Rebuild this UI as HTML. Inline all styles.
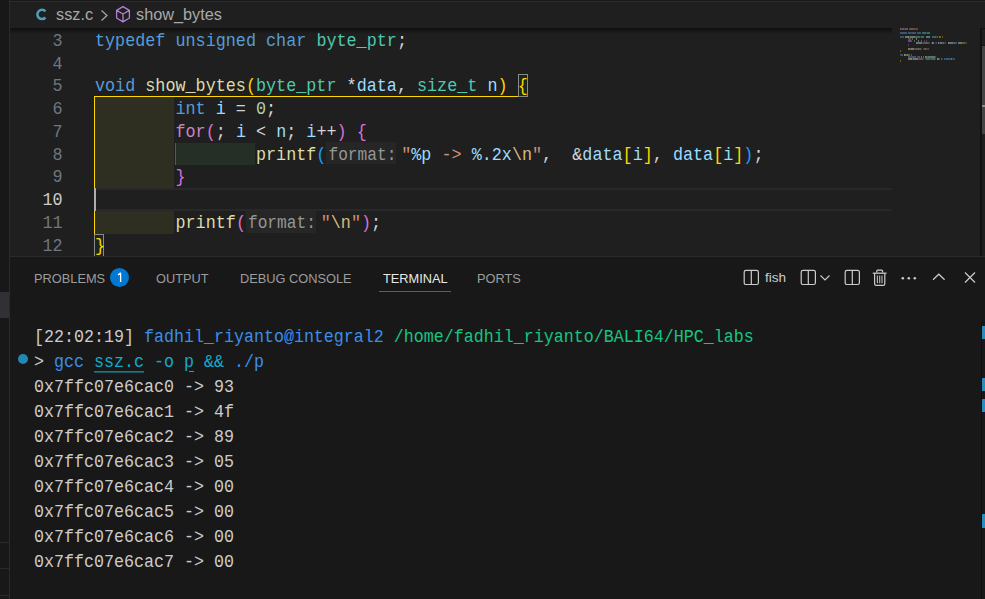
<!DOCTYPE html>
<html><head><meta charset="utf-8">
<style>
*{margin:0;padding:0;box-sizing:border-box}
html,body{width:985px;height:599px;overflow:hidden;background:#181818}
body{position:relative;font-family:"Liberation Sans",sans-serif}
.abs{position:absolute}
.ln{position:absolute;left:10.5px;width:52px;text-align:right;color:#6e7681;font-family:"Liberation Mono",monospace;font-size:16.77px;line-height:22.75px;height:22.75px;white-space:pre}
.ln.act{color:#cccccc}
.ln{transform:scaleY(1.09);transform-origin:0 14.75px}
.cl{position:absolute;left:95px;font-family:"Liberation Mono",monospace;font-size:16.77px;line-height:22.75px;height:22.75px;white-space:pre;color:#d4d4d4;transform:scaleY(1.09);transform-origin:0 14.75px}
.k{color:#569cd6}.t{color:#4ec9b0}.f{color:#dcdcaa}.v{color:#9cdcfe}.n{color:#b5cea8}.c{color:#c586c0}.s{color:#ce9178}.e{color:#d7ba7d}
.b1{color:#ffd700}.b2{color:#da70d6}.b3{color:#179fff}
.hint{display:inline-block;vertical-align:baseline;color:#969696;font-size:16.2px;width:70px;margin-left:0px;margin-right:4.8px;padding-left:2px}
.tab{position:absolute;top:271px;font-size:12.8px;color:#9d9d9d;line-height:16px;white-space:nowrap}
.term{position:absolute;left:34px;font-family:"Liberation Mono",monospace;font-size:16.67px;line-height:25px;height:25px;white-space:pre;color:#cccccc;transform:scaleY(1.08);transform-origin:0 16.7px}
.ul{text-decoration:underline;text-underline-offset:4px}
</style></head><body>
<!-- sidebar strip -->
<div class="abs" style="left:9px;top:0;width:1px;height:599px;background:#2b2b2b"></div>
<div class="abs" style="left:0;top:292px;width:9px;height:26px;background:#303035"></div>
<div class="abs" style="left:0;top:542px;width:9px;height:1px;background:#2b2b2b"></div>
<div class="abs" style="left:0;top:568px;width:9px;height:1px;background:#2b2b2b"></div>
<div class="abs" style="left:0;top:595px;width:9px;height:1px;background:#2b2b2b"></div>
<!-- tabs bottom line -->
<div class="abs" style="left:10px;top:1px;width:975px;height:1px;background:#2b2b2b"></div>
<!-- breadcrumb + editor bg -->
<div class="abs" style="left:10px;top:2px;width:975px;height:254px;background:#1f1f1f"></div>
<svg class="abs" style="left:34px;top:6px" width="14" height="16" viewBox="0 0 14 16"><path d="M11.4 5.3 A4.6 4.6 0 1 0 11.4 11.5" fill="none" stroke="#519aba" stroke-width="2.6"/></svg>
<div class="abs" style="left:56px;top:5px;font-size:16.3px;color:#a9a9a9;line-height:18px">ssz.c</div>
<svg class="abs" style="left:100px;top:9px" width="9" height="13" viewBox="0 0 9 13"><path d="M1.5 1.5 L7 6.5 L1.5 11.5" fill="none" stroke="#a9a9a9" stroke-width="1.2"/></svg>
<svg class="abs" style="left:114px;top:5px" width="18" height="19" viewBox="0 0 18 19"><path d="M9 1.6 L15.4 5.4 L15.4 13 L9 16.9 L2.6 13 L2.6 5.4 Z M2.6 5.4 L9 9 L15.4 5.4 M9 9 L9 16.9" fill="none" stroke="#b180d7" stroke-width="1.3" stroke-linejoin="round"/></svg>
<div class="abs" style="left:136px;top:5px;font-size:16.3px;color:#a9a9a9;line-height:18px">show_bytes</div>

<!-- current line borders (line 10) -->
<div class="abs" style="left:95px;top:188.2px;width:797px;height:1.5px;background:#282828"></div>
<div class="abs" style="left:95px;top:209.2px;width:797px;height:1.5px;background:#282828"></div>
<!-- indent rainbow -->
<div class="abs" style="left:95px;top:97px;width:79px;height:91px;background:#2f2f21"></div>
<div class="abs" style="left:95px;top:210.75px;width:79px;height:22.75px;background:#2f2f21"></div>
<div class="abs" style="left:175px;top:142.5px;width:80px;height:22.75px;background:#262f26"></div>
<div class="abs" style="left:175px;top:142.5px;width:1px;height:22.75px;background:#6d4a6b"></div>
<!-- bracket guide -->
<div class="abs" style="left:94px;top:96px;width:1.2px;height:137.5px;background:#ffd700"></div>
<div class="abs" style="left:94px;top:96px;width:424px;height:1.2px;background:#ffd700"></div>
<!-- bracket match boxes -->
<div class="abs" style="left:517.5px;top:74px;width:10px;height:23px;border:1px solid #8a8a8a;background:#1c261c"></div>
<div class="abs" style="left:94px;top:233.5px;width:10px;height:23px;border:1px solid #8a8a8a;background:#1c261c"></div>
<div class="abs" style="left:326.4px;top:142.3px;width:70px;height:22px;background:#262626"></div>
<div class="abs" style="left:245.9px;top:210.8px;width:70px;height:22.3px;background:#262626"></div>
<!-- cursor -->
<div class="abs" style="left:94px;top:188px;width:2px;height:22.75px;background:#aeafad"></div>

<div class="ln" style="top:30.75px">3</div>
<div class="ln" style="top:53.50px">4</div>
<div class="ln" style="top:76.25px">5</div>
<div class="ln" style="top:99.00px">6</div>
<div class="ln" style="top:121.75px">7</div>
<div class="ln" style="top:144.50px">8</div>
<div class="ln" style="top:167.25px">9</div>
<div class="ln act" style="top:190.00px">10</div>
<div class="ln" style="top:212.75px">11</div>
<div class="ln" style="top:235.50px">12</div>
<div class="cl" style="top:30.75px"><span class="k">typedef</span> <span class="k">unsigned</span> <span class="k">char</span> <span class="t">byte_ptr</span>;</div>
<div class="cl" style="top:76.25px"><span class="k">void</span> <span class="f">show_bytes</span><span class="b1">(</span><span class="t">byte_ptr</span> *<span class="v">data</span>, <span class="t">size_t</span> <span class="v">n</span><span class="b1">)</span> <span class="b1">{</span></div>
<div class="cl" style="top:99.00px">        <span class="k">int</span> <span class="v">i</span> = <span class="n">0</span>;</div>
<div class="cl" style="top:121.75px">        <span class="c">for</span><span class="b2">(</span>; <span class="v">i</span> &lt; <span class="v">n</span>; <span class="v">i</span>++<span class="b2">)</span> <span class="b2">{</span></div>
<div class="cl" style="top:144.50px">                <span class="f">printf</span><span class="b3">(</span><span class="hint">format:</span><span class="s">"</span><span class="v">%p</span><span class="s"> -&gt; </span><span class="v">%.2x</span><span class="e">\n</span><span class="s">"</span>,  &amp;<span class="v">data</span><span class="b1">[</span><span class="v">i</span><span class="b1">]</span>, <span class="v">data</span><span class="b1">[</span><span class="v">i</span><span class="b1">]</span><span class="b3">)</span>;</div>
<div class="cl" style="top:167.25px">        <span class="b2">}</span></div>
<div class="cl" style="top:212.75px">        <span class="f">printf</span><span class="b2">(</span><span class="hint">format:</span><span class="s">"</span><span class="e">\n</span><span class="s">"</span><span class="b2">)</span>;</div>
<div class="cl" style="top:235.50px"><span class="b1">}</span></div>

<!-- scroll shadow -->
<div class="abs" style="left:10px;top:28px;width:882px;height:6px;background:linear-gradient(#0f0f0f,rgba(31,31,31,0))"></div>
<!-- minimap -->
<svg class="abs" style="left:900px;top:0px" width="80" height="70" viewBox="0 0 80 70" shape-rendering="crispEdges"><rect x="0" y="28" width="1" height="2" fill="#c586c0" fill-opacity="0.55"/><rect x="1" y="28" width="1" height="2" fill="#c586c0" fill-opacity="0.32"/><rect x="2" y="28" width="1" height="2" fill="#c586c0" fill-opacity="0.45"/><rect x="3" y="28" width="1" height="2" fill="#c586c0" fill-opacity="0.45"/><rect x="4" y="28" width="1" height="2" fill="#c586c0" fill-opacity="0.32"/><rect x="5" y="28" width="1" height="2" fill="#c586c0" fill-opacity="0.45"/><rect x="6" y="28" width="1" height="2" fill="#c586c0" fill-opacity="0.45"/><rect x="7" y="28" width="1" height="2" fill="#c586c0" fill-opacity="0.45"/><rect x="9" y="28" width="1" height="2" fill="#ce9178" fill-opacity="0.32"/><rect x="10" y="28" width="1" height="2" fill="#ce9178" fill-opacity="0.45"/><rect x="11" y="28" width="1" height="2" fill="#ce9178" fill-opacity="0.45"/><rect x="12" y="28" width="1" height="2" fill="#ce9178" fill-opacity="0.45"/><rect x="13" y="28" width="1" height="2" fill="#ce9178" fill-opacity="0.32"/><rect x="14" y="28" width="1" height="2" fill="#ce9178" fill-opacity="0.45"/><rect x="15" y="28" width="1" height="2" fill="#ce9178" fill-opacity="0.22"/><rect x="16" y="28" width="1" height="2" fill="#ce9178" fill-opacity="0.45"/><rect x="17" y="28" width="1" height="2" fill="#ce9178" fill-opacity="0.32"/><rect x="0" y="32" width="1" height="2" fill="#569cd6" fill-opacity="0.45"/><rect x="1" y="32" width="1" height="2" fill="#569cd6" fill-opacity="0.45"/><rect x="2" y="32" width="1" height="2" fill="#569cd6" fill-opacity="0.45"/><rect x="3" y="32" width="1" height="2" fill="#569cd6" fill-opacity="0.45"/><rect x="4" y="32" width="1" height="2" fill="#569cd6" fill-opacity="0.45"/><rect x="5" y="32" width="1" height="2" fill="#569cd6" fill-opacity="0.45"/><rect x="6" y="32" width="1" height="2" fill="#569cd6" fill-opacity="0.45"/><rect x="8" y="32" width="1" height="2" fill="#569cd6" fill-opacity="0.45"/><rect x="9" y="32" width="1" height="2" fill="#569cd6" fill-opacity="0.45"/><rect x="10" y="32" width="1" height="2" fill="#569cd6" fill-opacity="0.45"/><rect x="11" y="32" width="1" height="2" fill="#569cd6" fill-opacity="0.32"/><rect x="12" y="32" width="1" height="2" fill="#569cd6" fill-opacity="0.45"/><rect x="13" y="32" width="1" height="2" fill="#569cd6" fill-opacity="0.45"/><rect x="14" y="32" width="1" height="2" fill="#569cd6" fill-opacity="0.45"/><rect x="15" y="32" width="1" height="2" fill="#569cd6" fill-opacity="0.45"/><rect x="17" y="32" width="1" height="2" fill="#569cd6" fill-opacity="0.45"/><rect x="18" y="32" width="1" height="2" fill="#569cd6" fill-opacity="0.45"/><rect x="19" y="32" width="1" height="2" fill="#569cd6" fill-opacity="0.45"/><rect x="20" y="32" width="1" height="2" fill="#569cd6" fill-opacity="0.45"/><rect x="22" y="32" width="1" height="2" fill="#4ec9b0" fill-opacity="0.45"/><rect x="23" y="32" width="1" height="2" fill="#4ec9b0" fill-opacity="0.45"/><rect x="24" y="32" width="1" height="2" fill="#4ec9b0" fill-opacity="0.45"/><rect x="25" y="32" width="1" height="2" fill="#4ec9b0" fill-opacity="0.45"/><rect x="26" y="32" width="1" height="2" fill="#4ec9b0" fill-opacity="0.22"/><rect x="27" y="32" width="1" height="2" fill="#4ec9b0" fill-opacity="0.45"/><rect x="28" y="32" width="1" height="2" fill="#4ec9b0" fill-opacity="0.45"/><rect x="29" y="32" width="1" height="2" fill="#4ec9b0" fill-opacity="0.45"/><rect x="0" y="36" width="1" height="2" fill="#569cd6" fill-opacity="0.45"/><rect x="1" y="36" width="1" height="2" fill="#569cd6" fill-opacity="0.45"/><rect x="2" y="36" width="1" height="2" fill="#569cd6" fill-opacity="0.32"/><rect x="3" y="36" width="1" height="2" fill="#569cd6" fill-opacity="0.45"/><rect x="5" y="36" width="1" height="2" fill="#dcdcaa" fill-opacity="0.45"/><rect x="6" y="36" width="1" height="2" fill="#dcdcaa" fill-opacity="0.45"/><rect x="7" y="36" width="1" height="2" fill="#dcdcaa" fill-opacity="0.45"/><rect x="8" y="36" width="1" height="2" fill="#dcdcaa" fill-opacity="0.55"/><rect x="9" y="36" width="1" height="2" fill="#dcdcaa" fill-opacity="0.22"/><rect x="10" y="36" width="1" height="2" fill="#dcdcaa" fill-opacity="0.45"/><rect x="11" y="36" width="1" height="2" fill="#dcdcaa" fill-opacity="0.45"/><rect x="12" y="36" width="1" height="2" fill="#dcdcaa" fill-opacity="0.45"/><rect x="13" y="36" width="1" height="2" fill="#dcdcaa" fill-opacity="0.45"/><rect x="14" y="36" width="1" height="2" fill="#dcdcaa" fill-opacity="0.45"/><rect x="15" y="36" width="1" height="2" fill="#ffd700" fill-opacity="0.32"/><rect x="16" y="36" width="1" height="2" fill="#4ec9b0" fill-opacity="0.45"/><rect x="17" y="36" width="1" height="2" fill="#4ec9b0" fill-opacity="0.45"/><rect x="18" y="36" width="1" height="2" fill="#4ec9b0" fill-opacity="0.45"/><rect x="19" y="36" width="1" height="2" fill="#4ec9b0" fill-opacity="0.45"/><rect x="20" y="36" width="1" height="2" fill="#4ec9b0" fill-opacity="0.22"/><rect x="21" y="36" width="1" height="2" fill="#4ec9b0" fill-opacity="0.45"/><rect x="22" y="36" width="1" height="2" fill="#4ec9b0" fill-opacity="0.45"/><rect x="23" y="36" width="1" height="2" fill="#4ec9b0" fill-opacity="0.45"/><rect x="26" y="36" width="1" height="2" fill="#9cdcfe" fill-opacity="0.45"/><rect x="27" y="36" width="1" height="2" fill="#9cdcfe" fill-opacity="0.45"/><rect x="28" y="36" width="1" height="2" fill="#9cdcfe" fill-opacity="0.45"/><rect x="29" y="36" width="1" height="2" fill="#9cdcfe" fill-opacity="0.45"/><rect x="32" y="36" width="1" height="2" fill="#4ec9b0" fill-opacity="0.45"/><rect x="33" y="36" width="1" height="2" fill="#4ec9b0" fill-opacity="0.32"/><rect x="34" y="36" width="1" height="2" fill="#4ec9b0" fill-opacity="0.45"/><rect x="35" y="36" width="1" height="2" fill="#4ec9b0" fill-opacity="0.45"/><rect x="36" y="36" width="1" height="2" fill="#4ec9b0" fill-opacity="0.22"/><rect x="37" y="36" width="1" height="2" fill="#4ec9b0" fill-opacity="0.45"/><rect x="39" y="36" width="1" height="2" fill="#9cdcfe" fill-opacity="0.45"/><rect x="40" y="36" width="1" height="2" fill="#ffd700" fill-opacity="0.32"/><rect x="42" y="36" width="1" height="2" fill="#ffd700" fill-opacity="0.32"/><rect x="8" y="38" width="1" height="2" fill="#569cd6" fill-opacity="0.32"/><rect x="9" y="38" width="1" height="2" fill="#569cd6" fill-opacity="0.45"/><rect x="10" y="38" width="1" height="2" fill="#569cd6" fill-opacity="0.45"/><rect x="12" y="38" width="1" height="2" fill="#9cdcfe" fill-opacity="0.32"/><rect x="16" y="38" width="1" height="2" fill="#b5cea8" fill-opacity="0.55"/><rect x="8" y="40" width="1" height="2" fill="#c586c0" fill-opacity="0.45"/><rect x="9" y="40" width="1" height="2" fill="#c586c0" fill-opacity="0.45"/><rect x="10" y="40" width="1" height="2" fill="#c586c0" fill-opacity="0.45"/><rect x="11" y="40" width="1" height="2" fill="#da70d6" fill-opacity="0.32"/><rect x="14" y="40" width="1" height="2" fill="#9cdcfe" fill-opacity="0.32"/><rect x="18" y="40" width="1" height="2" fill="#9cdcfe" fill-opacity="0.45"/><rect x="21" y="40" width="1" height="2" fill="#9cdcfe" fill-opacity="0.32"/><rect x="24" y="40" width="1" height="2" fill="#da70d6" fill-opacity="0.32"/><rect x="26" y="40" width="1" height="2" fill="#da70d6" fill-opacity="0.32"/><rect x="16" y="42" width="1" height="2" fill="#dcdcaa" fill-opacity="0.45"/><rect x="17" y="42" width="1" height="2" fill="#dcdcaa" fill-opacity="0.45"/><rect x="18" y="42" width="1" height="2" fill="#dcdcaa" fill-opacity="0.32"/><rect x="19" y="42" width="1" height="2" fill="#dcdcaa" fill-opacity="0.45"/><rect x="20" y="42" width="1" height="2" fill="#dcdcaa" fill-opacity="0.45"/><rect x="21" y="42" width="1" height="2" fill="#dcdcaa" fill-opacity="0.45"/><rect x="22" y="42" width="1" height="2" fill="#179fff" fill-opacity="0.32"/><rect x="23" y="42" width="1" height="2" fill="#9a9680" fill-opacity="0.45"/><rect x="24" y="42" width="1" height="2" fill="#9a9680" fill-opacity="0.45"/><rect x="25" y="42" width="1" height="2" fill="#9a9680" fill-opacity="0.45"/><rect x="26" y="42" width="1" height="2" fill="#9a9680" fill-opacity="0.55"/><rect x="27" y="42" width="1" height="2" fill="#9a9680" fill-opacity="0.45"/><rect x="28" y="42" width="1" height="2" fill="#9a9680" fill-opacity="0.45"/><rect x="29" y="42" width="1" height="2" fill="#9a9680" fill-opacity="0.22"/><rect x="31" y="42" width="1" height="2" fill="#ce9178" fill-opacity="0.22"/><rect x="32" y="42" width="1" height="2" fill="#9cdcfe" fill-opacity="0.55"/><rect x="33" y="42" width="1" height="2" fill="#9cdcfe" fill-opacity="0.45"/><rect x="35" y="42" width="1" height="2" fill="#ce9178" fill-opacity="0.22"/><rect x="36" y="42" width="1" height="2" fill="#ce9178" fill-opacity="0.32"/><rect x="38" y="42" width="1" height="2" fill="#9cdcfe" fill-opacity="0.55"/><rect x="39" y="42" width="1" height="2" fill="#9cdcfe" fill-opacity="0.22"/><rect x="40" y="42" width="1" height="2" fill="#9cdcfe" fill-opacity="0.45"/><rect x="41" y="42" width="1" height="2" fill="#9cdcfe" fill-opacity="0.45"/><rect x="42" y="42" width="1" height="2" fill="#d7ba7d" fill-opacity="0.32"/><rect x="43" y="42" width="1" height="2" fill="#d7ba7d" fill-opacity="0.45"/><rect x="44" y="42" width="1" height="2" fill="#ce9178" fill-opacity="0.22"/><rect x="45" y="42" width="1" height="2" fill="#d4d4d4" fill-opacity="0.22"/><rect x="48" y="42" width="1" height="2" fill="#d4d4d4" fill-opacity="0.55"/><rect x="49" y="42" width="1" height="2" fill="#9cdcfe" fill-opacity="0.45"/><rect x="50" y="42" width="1" height="2" fill="#9cdcfe" fill-opacity="0.45"/><rect x="51" y="42" width="1" height="2" fill="#9cdcfe" fill-opacity="0.45"/><rect x="52" y="42" width="1" height="2" fill="#9cdcfe" fill-opacity="0.45"/><rect x="53" y="42" width="1" height="2" fill="#ffd700" fill-opacity="0.32"/><rect x="54" y="42" width="1" height="2" fill="#9cdcfe" fill-opacity="0.32"/><rect x="55" y="42" width="1" height="2" fill="#ffd700" fill-opacity="0.32"/><rect x="56" y="42" width="1" height="2" fill="#d4d4d4" fill-opacity="0.22"/><rect x="58" y="42" width="1" height="2" fill="#9cdcfe" fill-opacity="0.45"/><rect x="59" y="42" width="1" height="2" fill="#9cdcfe" fill-opacity="0.45"/><rect x="60" y="42" width="1" height="2" fill="#9cdcfe" fill-opacity="0.45"/><rect x="61" y="42" width="1" height="2" fill="#9cdcfe" fill-opacity="0.45"/><rect x="62" y="42" width="1" height="2" fill="#ffd700" fill-opacity="0.32"/><rect x="63" y="42" width="1" height="2" fill="#9cdcfe" fill-opacity="0.32"/><rect x="64" y="42" width="1" height="2" fill="#ffd700" fill-opacity="0.32"/><rect x="65" y="42" width="1" height="2" fill="#179fff" fill-opacity="0.32"/><rect x="66" y="42" width="1" height="2" fill="#d4d4d4" fill-opacity="0.22"/><rect x="8" y="44" width="1" height="2" fill="#da70d6" fill-opacity="0.32"/><rect x="8" y="48" width="1" height="2" fill="#dcdcaa" fill-opacity="0.45"/><rect x="9" y="48" width="1" height="2" fill="#dcdcaa" fill-opacity="0.45"/><rect x="10" y="48" width="1" height="2" fill="#dcdcaa" fill-opacity="0.32"/><rect x="11" y="48" width="1" height="2" fill="#dcdcaa" fill-opacity="0.45"/><rect x="12" y="48" width="1" height="2" fill="#dcdcaa" fill-opacity="0.45"/><rect x="13" y="48" width="1" height="2" fill="#dcdcaa" fill-opacity="0.45"/><rect x="14" y="48" width="1" height="2" fill="#da70d6" fill-opacity="0.32"/><rect x="15" y="48" width="1" height="2" fill="#9a9680" fill-opacity="0.45"/><rect x="16" y="48" width="1" height="2" fill="#9a9680" fill-opacity="0.45"/><rect x="17" y="48" width="1" height="2" fill="#9a9680" fill-opacity="0.45"/><rect x="18" y="48" width="1" height="2" fill="#9a9680" fill-opacity="0.55"/><rect x="19" y="48" width="1" height="2" fill="#9a9680" fill-opacity="0.45"/><rect x="20" y="48" width="1" height="2" fill="#9a9680" fill-opacity="0.45"/><rect x="21" y="48" width="1" height="2" fill="#9a9680" fill-opacity="0.22"/><rect x="23" y="48" width="1" height="2" fill="#ce9178" fill-opacity="0.22"/><rect x="24" y="48" width="1" height="2" fill="#d7ba7d" fill-opacity="0.32"/><rect x="25" y="48" width="1" height="2" fill="#d7ba7d" fill-opacity="0.45"/><rect x="26" y="48" width="1" height="2" fill="#ce9178" fill-opacity="0.22"/><rect x="27" y="48" width="1" height="2" fill="#da70d6" fill-opacity="0.32"/><rect x="28" y="48" width="1" height="2" fill="#d4d4d4" fill-opacity="0.22"/><rect x="0" y="50" width="1" height="2" fill="#ffd700" fill-opacity="0.32"/><rect x="0" y="54" width="1" height="2" fill="#569cd6" fill-opacity="0.32"/><rect x="1" y="54" width="1" height="2" fill="#569cd6" fill-opacity="0.45"/><rect x="2" y="54" width="1" height="2" fill="#569cd6" fill-opacity="0.45"/><rect x="4" y="54" width="1" height="2" fill="#dcdcaa" fill-opacity="0.55"/><rect x="5" y="54" width="1" height="2" fill="#dcdcaa" fill-opacity="0.45"/><rect x="6" y="54" width="1" height="2" fill="#dcdcaa" fill-opacity="0.32"/><rect x="7" y="54" width="1" height="2" fill="#dcdcaa" fill-opacity="0.45"/><rect x="8" y="54" width="1" height="2" fill="#ffd700" fill-opacity="0.32"/><rect x="9" y="54" width="1" height="2" fill="#ffd700" fill-opacity="0.32"/><rect x="11" y="54" width="1" height="2" fill="#ffd700" fill-opacity="0.32"/><rect x="8" y="56" width="1" height="2" fill="#569cd6" fill-opacity="0.45"/><rect x="9" y="56" width="1" height="2" fill="#569cd6" fill-opacity="0.45"/><rect x="10" y="56" width="1" height="2" fill="#569cd6" fill-opacity="0.45"/><rect x="11" y="56" width="1" height="2" fill="#569cd6" fill-opacity="0.32"/><rect x="12" y="56" width="1" height="2" fill="#569cd6" fill-opacity="0.45"/><rect x="13" y="56" width="1" height="2" fill="#569cd6" fill-opacity="0.45"/><rect x="14" y="56" width="1" height="2" fill="#569cd6" fill-opacity="0.45"/><rect x="15" y="56" width="1" height="2" fill="#569cd6" fill-opacity="0.45"/><rect x="17" y="56" width="1" height="2" fill="#569cd6" fill-opacity="0.32"/><rect x="18" y="56" width="1" height="2" fill="#569cd6" fill-opacity="0.45"/><rect x="19" y="56" width="1" height="2" fill="#569cd6" fill-opacity="0.45"/><rect x="21" y="56" width="1" height="2" fill="#9cdcfe" fill-opacity="0.45"/><rect x="23" y="56" width="1" height="2" fill="#d4d4d4" fill-opacity="0.32"/><rect x="25" y="56" width="1" height="2" fill="#b5cea8" fill-opacity="0.55"/><rect x="26" y="56" width="1" height="2" fill="#b5cea8" fill-opacity="0.45"/><rect x="27" y="56" width="1" height="2" fill="#b5cea8" fill-opacity="0.32"/><rect x="28" y="56" width="1" height="2" fill="#b5cea8" fill-opacity="0.45"/><rect x="29" y="56" width="1" height="2" fill="#b5cea8" fill-opacity="0.45"/><rect x="30" y="56" width="1" height="2" fill="#b5cea8" fill-opacity="0.45"/><rect x="31" y="56" width="1" height="2" fill="#b5cea8" fill-opacity="0.45"/><rect x="32" y="56" width="1" height="2" fill="#b5cea8" fill-opacity="0.45"/><rect x="33" y="56" width="1" height="2" fill="#b5cea8" fill-opacity="0.45"/><rect x="34" y="56" width="1" height="2" fill="#b5cea8" fill-opacity="0.45"/><rect x="35" y="56" width="1" height="2" fill="#d4d4d4" fill-opacity="0.22"/><rect x="8" y="58" width="1" height="2" fill="#dcdcaa" fill-opacity="0.45"/><rect x="9" y="58" width="1" height="2" fill="#dcdcaa" fill-opacity="0.45"/><rect x="10" y="58" width="1" height="2" fill="#dcdcaa" fill-opacity="0.45"/><rect x="11" y="58" width="1" height="2" fill="#dcdcaa" fill-opacity="0.55"/><rect x="12" y="58" width="1" height="2" fill="#dcdcaa" fill-opacity="0.22"/><rect x="13" y="58" width="1" height="2" fill="#dcdcaa" fill-opacity="0.45"/><rect x="14" y="58" width="1" height="2" fill="#dcdcaa" fill-opacity="0.45"/><rect x="15" y="58" width="1" height="2" fill="#dcdcaa" fill-opacity="0.45"/><rect x="16" y="58" width="1" height="2" fill="#dcdcaa" fill-opacity="0.45"/><rect x="17" y="58" width="1" height="2" fill="#dcdcaa" fill-opacity="0.45"/><rect x="18" y="58" width="1" height="2" fill="#da70d6" fill-opacity="0.32"/><rect x="19" y="58" width="1" height="2" fill="#9a9680" fill-opacity="0.45"/><rect x="20" y="58" width="1" height="2" fill="#9a9680" fill-opacity="0.45"/><rect x="21" y="58" width="1" height="2" fill="#9a9680" fill-opacity="0.45"/><rect x="22" y="58" width="1" height="2" fill="#9a9680" fill-opacity="0.45"/><rect x="23" y="58" width="1" height="2" fill="#9a9680" fill-opacity="0.22"/><rect x="25" y="58" width="1" height="2" fill="#179fff" fill-opacity="0.32"/><rect x="26" y="58" width="1" height="2" fill="#4ec9b0" fill-opacity="0.45"/><rect x="27" y="58" width="1" height="2" fill="#4ec9b0" fill-opacity="0.45"/><rect x="28" y="58" width="1" height="2" fill="#4ec9b0" fill-opacity="0.45"/><rect x="29" y="58" width="1" height="2" fill="#4ec9b0" fill-opacity="0.45"/><rect x="30" y="58" width="1" height="2" fill="#4ec9b0" fill-opacity="0.22"/><rect x="31" y="58" width="1" height="2" fill="#4ec9b0" fill-opacity="0.45"/><rect x="32" y="58" width="1" height="2" fill="#4ec9b0" fill-opacity="0.45"/><rect x="33" y="58" width="1" height="2" fill="#4ec9b0" fill-opacity="0.45"/><rect x="34" y="58" width="1" height="2" fill="#d4d4d4" fill-opacity="0.32"/><rect x="35" y="58" width="1" height="2" fill="#179fff" fill-opacity="0.32"/><rect x="37" y="58" width="1" height="2" fill="#d4d4d4" fill-opacity="0.55"/><rect x="38" y="58" width="1" height="2" fill="#9cdcfe" fill-opacity="0.45"/><rect x="39" y="58" width="1" height="2" fill="#d4d4d4" fill-opacity="0.22"/><rect x="41" y="58" width="1" height="2" fill="#9a9680" fill-opacity="0.45"/><rect x="42" y="58" width="1" height="2" fill="#9a9680" fill-opacity="0.22"/><rect x="44" y="58" width="1" height="2" fill="#569cd6" fill-opacity="0.45"/><rect x="45" y="58" width="1" height="2" fill="#569cd6" fill-opacity="0.32"/><rect x="46" y="58" width="1" height="2" fill="#569cd6" fill-opacity="0.45"/><rect x="47" y="58" width="1" height="2" fill="#569cd6" fill-opacity="0.45"/><rect x="48" y="58" width="1" height="2" fill="#569cd6" fill-opacity="0.45"/><rect x="49" y="58" width="1" height="2" fill="#569cd6" fill-opacity="0.45"/><rect x="50" y="58" width="1" height="2" fill="#179fff" fill-opacity="0.32"/><rect x="51" y="58" width="1" height="2" fill="#9cdcfe" fill-opacity="0.45"/><rect x="52" y="58" width="1" height="2" fill="#179fff" fill-opacity="0.32"/><rect x="53" y="58" width="1" height="2" fill="#da70d6" fill-opacity="0.32"/><rect x="54" y="58" width="1" height="2" fill="#d4d4d4" fill-opacity="0.22"/><rect x="0" y="60" width="1" height="2" fill="#ffd700" fill-opacity="0.32"/></svg>
<!-- editor scrollbar -->
<div class="abs" style="left:980.3px;top:28.3px;width:1.5px;height:227.7px;background:#111111"></div>
<div class="abs" style="left:980.3px;top:28.3px;width:5px;height:1px;background:#111111"></div>
<div class="abs" style="left:980.3px;top:45px;width:5px;height:1px;background:#111111"></div>
<div class="abs" style="left:981.5px;top:46px;width:3.5px;height:88px;background:#434343"></div>
<div class="abs" style="left:981.5px;top:105px;width:3.5px;height:2px;background:#8a8a8a"></div>

<!-- panel -->
<div class="abs" style="left:10px;top:256px;width:975px;height:1px;background:#2b2b2b"></div>
<div class="tab" style="left:34px">PROBLEMS</div>
<div class="abs" style="left:110px;top:268px;width:19px;height:19px;border-radius:50%;background:#0078d4"></div>
<svg class="abs" style="left:110px;top:268px" width="19" height="19" viewBox="0 0 19 19"><path d="M8.1 6.9 L10.6 5.1 V13.9" fill="none" stroke="#ffffff" stroke-width="1.3" stroke-linejoin="round"/></svg>
<div class="tab" style="left:156px">OUTPUT</div>
<div class="tab" style="left:240px">DEBUG CONSOLE</div>
<div class="tab" style="left:383px;color:#e7e7e7">TERMINAL</div>
<div class="abs" style="left:379px;top:291px;width:72px;height:1px;background:#0078d4"></div>
<div class="tab" style="left:477px">PORTS</div>

<!-- toolbar -->
<svg class="abs" style="left:743px;top:269px" width="17" height="17" viewBox="0 0 17 17"><rect x="1.2" y="1.3" width="14.2" height="14.2" rx="1.8" fill="none" stroke="#cccccc" stroke-width="1.2"/><path d="M8.3 1.3 V15.5" stroke="#cccccc" stroke-width="1.2"/></svg>
<div class="abs" style="left:765px;top:271px;font-size:13.6px;color:#cccccc;line-height:14px">fish</div>
<svg class="abs" style="left:800px;top:269px" width="17" height="17" viewBox="0 0 17 17"><rect x="1.2" y="1.3" width="14.2" height="14.2" rx="1.8" fill="none" stroke="#cccccc" stroke-width="1.2"/><path d="M8.3 1.3 V15.5" stroke="#cccccc" stroke-width="1.2"/></svg>
<svg class="abs" style="left:819px;top:273px" width="12" height="9" viewBox="0 0 12 9"><path d="M1.5 2.5 L6 7 L10.5 2.5" fill="none" stroke="#cccccc" stroke-width="1.1"/></svg>
<svg class="abs" style="left:844px;top:269px" width="17" height="17" viewBox="0 0 17 17"><rect x="1.2" y="1.3" width="14.2" height="14.2" rx="1.8" fill="none" stroke="#cccccc" stroke-width="1.2"/><path d="M8.3 1.3 V15.5" stroke="#cccccc" stroke-width="1.2"/></svg>
<svg class="abs" style="left:871px;top:268px" width="17" height="19" viewBox="0 0 17 19"><path d="M5.8 4.6 V3.2 Q5.8 2.2 6.8 2.2 H10.6 Q11.6 2.2 11.6 3.2 V4.6" fill="none" stroke="#cccccc" stroke-width="1.2"/><path d="M1.8 5.2 H15.6" stroke="#cccccc" stroke-width="1.3"/><path d="M3.6 5.5 V15.8 Q3.6 17.4 5.2 17.4 H12.2 Q13.8 17.4 13.8 15.8 V5.5" fill="none" stroke="#cccccc" stroke-width="1.2"/><path d="M6.4 7.5 V15.3 M8.7 7.5 V15.3 M11 7.5 V15.3" stroke="#bbbbbb" stroke-width="1.1"/></svg>
<svg class="abs" style="left:900px;top:275px" width="18" height="6" viewBox="0 0 18 6"><circle cx="2.8" cy="3.2" r="1.3" fill="#cccccc"/><circle cx="8.8" cy="3.2" r="1.3" fill="#cccccc"/><circle cx="14.8" cy="3.2" r="1.3" fill="#cccccc"/></svg>
<svg class="abs" style="left:931px;top:272px" width="15" height="10" viewBox="0 0 15 10"><path d="M2 7.8 L7.8 2.2 L13.6 7.8" fill="none" stroke="#cccccc" stroke-width="1.2"/></svg>
<svg class="abs" style="left:963px;top:271px" width="14" height="14" viewBox="0 0 14 14"><path d="M2 1.5 L12 11.5 M12 1.5 L2 11.5" fill="none" stroke="#cccccc" stroke-width="1.2"/></svg>

<!-- terminal -->
<div class="term" style="top:325.00px">[22:02:19] <span style="color:#3b8eea">fadhil_riyanto@integral2</span> <span style="color:#16c583">/home/fadhil_riyanto/BALI64/HPC_labs</span></div>
<div class="term" style="top:350.00px">&gt; <span style="color:#3b8eea">gcc</span> <span class="ul" style="color:#13aad0">ssz.c</span> <span style="color:#13aad0">-o p &amp;&amp;</span> <span style="color:#3b8eea">./p</span></div>
<div class="term" style="top:375.00px">0x7ffc07e6cac0 -&gt; 93</div>
<div class="term" style="top:400.00px">0x7ffc07e6cac1 -&gt; 4f</div>
<div class="term" style="top:425.00px">0x7ffc07e6cac2 -&gt; 89</div>
<div class="term" style="top:450.00px">0x7ffc07e6cac3 -&gt; 05</div>
<div class="term" style="top:475.00px">0x7ffc07e6cac4 -&gt; 00</div>
<div class="term" style="top:500.00px">0x7ffc07e6cac5 -&gt; 00</div>
<div class="term" style="top:525.00px">0x7ffc07e6cac6 -&gt; 00</div>
<div class="term" style="top:550.00px">0x7ffc07e6cac7 -&gt; 00</div>
<div class="abs" style="left:17.9px;top:353.9px;width:10.2px;height:10.2px;border-radius:50%;background:#2387b3"></div>
<div class="abs" style="left:189px;top:371px;width:5px;height:1px;background:#13aad0"></div>
<!-- terminal scrollbar -->
<div class="abs" style="left:980.5px;top:322px;width:1.2px;height:277px;background:#0e0e0e"></div>
<div class="abs" style="left:980.5px;top:322px;width:5px;height:1px;background:#0e0e0e"></div>
<div class="abs" style="left:982px;top:326px;width:3px;height:13px;background:#2a8bbf"></div>
<div class="abs" style="left:982px;top:378px;width:3px;height:13px;background:#2a8bbf"></div>
<div class="abs" style="left:982px;top:398.5px;width:3px;height:13.5px;background:#2a8bbf"></div>
<div class="abs" style="left:982px;top:514px;width:3px;height:13.7px;background:#2a8bbf"></div>
</body></html>
